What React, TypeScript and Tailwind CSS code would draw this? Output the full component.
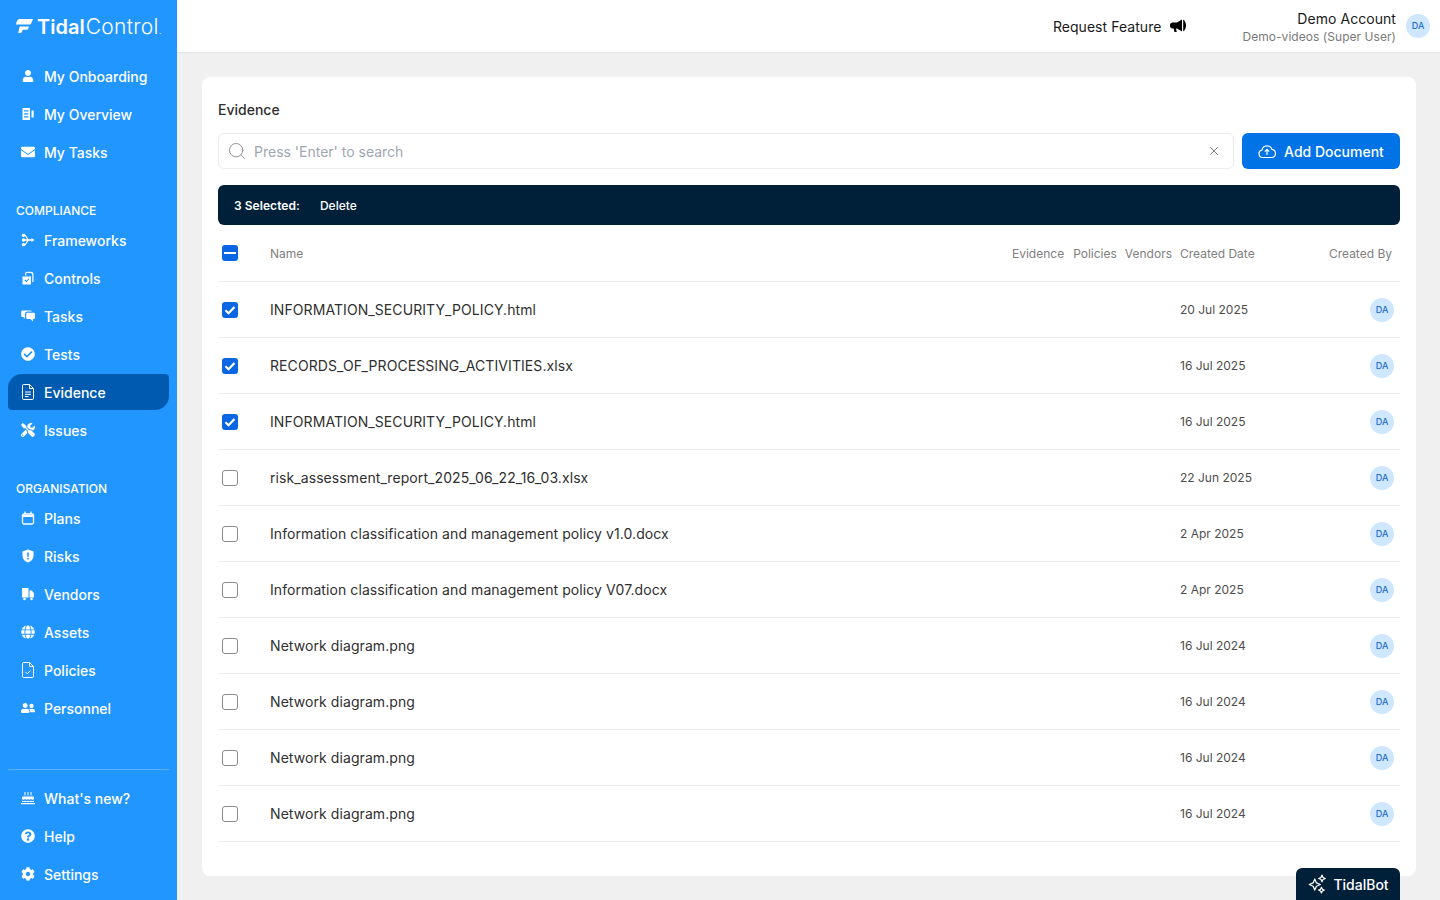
import { useState } from "react";
import type { ReactNode } from "react";

import { Search, X } from "lucide-react";
import {
  FaCheckCircle,
  FaCog,
  FaEnvelope,
  FaGlobe,
  FaQuestionCircle,
  FaTools,
  FaUser,
  FaUserFriends,
} from "react-icons/fa";

const iconClass = "h-[14px] w-[14px] shrink-0";

function OverviewIcon() {
  return (
    <svg viewBox="0 0 14 14" className={iconClass} fill="currentColor">
      <path d="M1.500 1h7.500v12H1.500zM3 3.200v1.300h4.500V3.200zM3 6.200v1.300h4.500V6.200zM3 9.200v1.300h4.500V9.200z" fillRule="evenodd" />
      <path d="M10.500 3.500h2.200v7h-2.200z" />
    </svg>
  );
}

function FrameworksIcon() {
  return (
    <svg viewBox="0 0 14 14" className={iconClass} fill="none" stroke="currentColor" strokeWidth="1.300">
      <path d="M3 2.200C6 2.200 5.500 7 8 7M3 11.800C6 11.800 5.500 7 8 7M3 7h8" />
      <path d="M10.500 5l3 2-3 2z" fill="currentColor" stroke="none" />
      <circle cx="2.500" cy="2.200" r="1.700" fill="currentColor" stroke="none" />
      <circle cx="2.500" cy="7" r="1.700" fill="currentColor" stroke="none" />
      <circle cx="2.500" cy="11.800" r="1.700" fill="currentColor" stroke="none" />
    </svg>
  );
}

function ControlsIcon() {
  return (
    <svg viewBox="0 0 14 14" className={iconClass} fill="currentColor">
      <path d="M1.500 5.500h8.500V13.500H1.500zM3.400 9.300l2 2 3-3.200-.8-.7-2.200 2.400-1.200-1.200z" fillRule="evenodd" />
      <path d="M4 4.500V3a2.200 2.200 0 0 1 2.200-2.200h3.300A2.800 2.800 0 0 1 12.500 3.500V11h-1.200V3.500A1.700 1.700 0 0 0 9.500 2H6.200A1 1 0 0 0 5.200 3v1.500z" />
    </svg>
  );
}

function ChatsIcon() {
  return (
    <svg viewBox="0 0 14 14" className={iconClass} fill="currentColor">
      <path d="M1.500 1.500h8a1.300 1.300 0 0 1 1.300 1.100H6.500A2.500 2.500 0 0 0 4 5.100v3.300l-1.200 2V8H1.500A1.300 1.300 0 0 1 .2 6.700V2.800A1.300 1.300 0 0 1 1.500 1.500z" />
      <path d="M6.500 3.800h6.200A1.300 1.300 0 0 1 14 5.100v3.600A1.300 1.300 0 0 1 12.700 10H12v2.500L9.500 10H6.500a1.300 1.300 0 0 1-1.300-1.300V5.100a1.300 1.300 0 0 1 1.300-1.300z" />
    </svg>
  );
}

function DocIcon({ check }: { check?: boolean }) {
  return (
    <svg viewBox="0 0 12 16" className="h-4 w-3 shrink-0" fill="none" stroke="currentColor" strokeWidth="1">
      <path d="M1.800.5h5.700l4 4v9.700a1.300 1.300 0 0 1-1.300 1.300H1.800A1.300 1.300 0 0 1 .5 14.200V1.800A1.300 1.300 0 0 1 1.800.5z" />
      <path d="M7.500.5v4h4" />
      {check ? <path d="M3.500 10l1.800 1.800 3.200-3.300" /> : <path d="M3 8h6M3 10.300h6M3 12.600h3.500" />}
    </svg>
  );
}

function PlansIcon() {
  return (
    <svg viewBox="0 0 14 14" className={iconClass} fill="none" stroke="currentColor">
      <rect x="1.500" y="3" width="11" height="10" rx="1.500" strokeWidth="1.300" />
      <path d="M1.500 5h11" strokeWidth="2" />
      <path d="M4 .5v2.500M10 .5v2.500" strokeWidth="1.300" />
    </svg>
  );
}

function RisksIcon() {
  return (
    <svg viewBox="0 0 14 14" className={iconClass} fill="currentColor">
      <path
        d="M7 .5l5.500 2v4.200c0 3.300-2.300 5.700-5.500 6.800-3.200-1.100-5.500-3.500-5.500-6.800V2.500zM6.200 3.500v4.200h1.600V3.500zM6.200 9v1.600h1.600V9z"
        fillRule="evenodd"
      />
    </svg>
  );
}

function VendorsIcon() {
  return (
    <svg viewBox="0 0 14 14" className={iconClass} fill="currentColor">
      <path d="M1 1h6.500v9.500H1zM8.500 3.500h2.500l2 3v4H8.500z" />
      <circle cx="3.500" cy="12" r="1.300" />
      <circle cx="10.500" cy="12" r="1.300" />
    </svg>
  );
}

function CakeIcon() {
  return (
    <svg viewBox="0 0 14 14" className={iconClass} fill="currentColor">
      <path d="M3.500 1h1v3.500h-1zM6.500 1h1v3.500h-1zM9.500 1h1v3.500h-1z" />
      <path d="M2 5.500h10a1 1 0 0 1 1 1v1.600c-1 .8-2 .8-3 0-1 .8-2 .8-3 0-1 .8-2 .8-3 0-1 .8-2 .8-3 0V6.500a1 1 0 0 1 1-1z" />
      <path d="M1 9.800c1 .5 2 .5 3 0 1 .5 2 .5 3 0 1 .5 2 .5 3 0 1 .5 2 .5 3 0V11H1zM0 12h14v1.300H0z" />
    </svg>
  );
}

function LogoMark() {
  return (
    <svg viewBox="0 0 17 14" className="h-[14px] w-[17px] shrink-0" fill="white">
      <path d="M3.500 0H17l-1.800 4.500a1.500 1.500 0 0 1-1.400 1H0C.3 2.500 1.500 0 3.500 0z" />
      <path d="M4 7.500h9l-.8 2.200a1.500 1.500 0 0 1-1.400 1H6.800l-1 2.300a1.500 1.500 0 0 1-1.400 1H2.200L3.500 8.300A1 1 0 0 1 4 7.500z" />
    </svg>
  );
}

function NavItem({ icon, label, active }: { icon: ReactNode; label: string; active?: boolean }) {
  return (
    <div
      className={`flex h-9 items-center gap-[9px] pl-[13px] text-[14px] font-medium text-white ${
        active ? "rounded-[4px] rounded-tl-[14px] rounded-br-[14px] bg-[#005bb0]" : ""
      }`}
    >
      <span className="flex w-[14px] justify-center">{icon}</span>
      <span>{label}</span>
    </div>
  );
}

function SectionLabel({ children }: { children: ReactNode }) {
  return <div className="mt-[33px] mb-[3px] pl-2 text-[12px] leading-4 font-medium text-white">{children}</div>;
}

function Sidebar() {
  return (
    <aside className="flex h-[900px] w-[177px] shrink-0 flex-col bg-[#2196ff] px-2 text-white">
      <div className="flex h-[58px] shrink-0 items-start gap-[4px] pt-[19px] pl-2">
        <LogoMark />
        <span className="-mt-[4px] text-[20px] leading-[24px] whitespace-nowrap">
          <span className="font-semibold">Tidal</span>
          <span className="ml-[1px] text-[21px] tracking-[0.3px] font-light">Control</span>
          <span className="text-[10px] font-light">.</span>
        </span>
      </div>

      <div className="flex flex-col gap-[2px]">
        <NavItem icon={<FaUser className="h-3 w-3 shrink-0" />} label="My Onboarding" />
        <NavItem icon={<OverviewIcon />} label="My Overview" />
        <NavItem icon={<FaEnvelope className={iconClass} />} label="My Tasks" />
      </div>

      <SectionLabel>COMPLIANCE</SectionLabel>
      <div className="flex flex-col gap-[2px]">
        <NavItem icon={<FrameworksIcon />} label="Frameworks" />
        <NavItem icon={<ControlsIcon />} label="Controls" />
        <NavItem icon={<ChatsIcon />} label="Tasks" />
        <NavItem icon={<FaCheckCircle className={iconClass} />} label="Tests" />
        <NavItem icon={<DocIcon />} label="Evidence" active />
        <NavItem icon={<FaTools className={iconClass} />} label="Issues" />
      </div>

      <SectionLabel>ORGANISATION</SectionLabel>
      <div className="flex flex-col gap-[2px]">
        <NavItem icon={<PlansIcon />} label="Plans" />
        <NavItem icon={<RisksIcon />} label="Risks" />
        <NavItem icon={<VendorsIcon />} label="Vendors" />
        <NavItem icon={<FaGlobe className={iconClass} />} label="Assets" />
        <NavItem icon={<DocIcon check />} label="Policies" />
        <NavItem icon={<FaUserFriends className={iconClass} />} label="Personnel" />
      </div>

      <div className="mt-auto border-t border-white/25 pt-[10px] pb-[8px]">
        <div className="flex flex-col gap-[2px]">
          <NavItem icon={<CakeIcon />} label="What's new?" />
          <NavItem icon={<FaQuestionCircle className={iconClass} />} label="Help" />
          <NavItem icon={<FaCog className={iconClass} />} label="Settings" />
        </div>
      </div>
    </aside>
  );
}

function Avatar() {
  return (
    <div className="flex h-6 w-6 items-center justify-center rounded-full bg-[#cfe6ff] text-[9px] font-medium text-[#1c6fc9]">
      DA
    </div>
  );
}

function MegaphoneIcon() {
  return (
    <svg viewBox="0 0 16 16" className="h-4 w-4 shrink-0" fill="black">
      <path d="M2.500 4.500H7l5-3v12l-5-3H6l.8 3.500H4.500L3.600 10.500H2.500A2.500 2.500 0 0 1 0 7.500a2.800 2.800 0 0 1 2.500-3z" />
      <path d="M13.200 1.500c1.700 1.200 2.800 3.500 2.800 6s-1.100 4.800-2.800 6z" />
    </svg>
  );
}

function TopBar() {
  return (
    <header className="flex h-[53px] shrink-0 items-center justify-end border-b border-[#e3e3e3] bg-white pr-[10px]">
      <div className="flex items-center gap-[9px] text-[14px] tracking-[0.05px] text-[#1a1a1a]">
        <span>Request Feature</span>
        <MegaphoneIcon />
      </div>
      <div className="ml-[56px] flex flex-col items-end pt-px">
        <span className="text-[14px] leading-[17px] tracking-[0.05px] text-[#1a1a1a]">Demo Account</span>
        <span className="mt-[2px] text-[12px] leading-[15px] tracking-[0.05px] text-[#7a7a7a]">
          Demo-videos (Super User)
        </span>
      </div>
      <div className="ml-[10px]">
        <Avatar />
      </div>
    </header>
  );
}

const rows = [
  { name: "INFORMATION_SECURITY_POLICY.html", date: "20 Jul 2025", checked: true },
  { name: "RECORDS_OF_PROCESSING_ACTIVITIES.xlsx", date: "16 Jul 2025", checked: true },
  { name: "INFORMATION_SECURITY_POLICY.html", date: "16 Jul 2025", checked: true },
  { name: "risk_assessment_report_2025_06_22_16_03.xlsx", date: "22 Jun 2025", checked: false },
  { name: "Information classification and management policy v1.0.docx", date: "2 Apr 2025", checked: false },
  { name: "Information classification and management policy V07.docx", date: "2 Apr 2025", checked: false },
  { name: "Network diagram.png", date: "16 Jul 2024", checked: false },
  { name: "Network diagram.png", date: "16 Jul 2024", checked: false },
  { name: "Network diagram.png", date: "16 Jul 2024", checked: false },
  { name: "Network diagram.png", date: "16 Jul 2024", checked: false },
];

function Checkbox({ state }: { state: "on" | "off" | "mixed" }) {
  if (state === "off") {
    return <div className="h-4 w-4 rounded-[3px] border border-[#8a8a8a] bg-white" />;
  }
  return (
    <div className="flex h-4 w-4 items-center justify-center rounded-[3px] bg-[#0b66e4]">
      {state === "on" ? (
        <svg viewBox="0 0 16 16" className="h-4 w-4" fill="none" stroke="white" strokeWidth="2.200">
          <path d="M3.500 8.300l3 3 6-6.300" />
        </svg>
      ) : (
        <div className="h-[2px] w-3 bg-white" />
      )}
    </div>
  );
}

function EvidenceTable() {
  return (
    <div className="flex flex-col">
      <div className="flex h-[57px] items-center border-b border-[#ececec] text-[12px] text-[#808080]">
        <div className="w-[52px] pl-1">
          <Checkbox state="mixed" />
        </div>
        <div className="flex-1 pt-px">Name</div>
        <div className="flex gap-2 pt-px">
          <span className="mr-px">Evidence</span>
          <span>Policies</span>
          <span>Vendors</span>
        </div>
        <div className="ml-2 w-[100px] pt-px">Created Date</div>
        <div className="max-w-[120px] flex-1 pt-px pr-2 text-right">Created By</div>
      </div>
      {rows.map((row, index) => (
        <div key={index} className="flex h-14 items-center border-b border-[#ececec]">
          <div className="w-[52px] pl-1">
            <Checkbox state={row.checked ? "on" : "off"} />
          </div>
          <div className="flex-1 text-[14px] tracking-[0.08px] text-[#2f2f2f]">{row.name}</div>
          <div className="w-[190px] text-[12px] text-[#4d4d4d]">{row.date}</div>
          <div className="pr-[6px]">
            <Avatar />
          </div>
        </div>
      ))}
    </div>
  );
}

function CloudIcon() {
  return (
    <svg viewBox="0 0 18 16" className="h-4 w-[18px] shrink-0" fill="none" stroke="white" strokeWidth="1.200">
      <path d="M4.500 14.500A3.800 3.800 0 0 1 4 7a5.200 5.200 0 0 1 10-.6 4.100 4.100 0 0 1 0 8.100z" />
      <path d="M9 12V6.500M6.800 8.600L9 6.400l2.200 2.200" />
    </svg>
  );
}

function SparkIcon() {
  return (
    <svg viewBox="0 0 18 18" className="h-5 w-5 shrink-0" fill="none" stroke="white" strokeWidth="1.100" strokeLinejoin="round">
      <path d="M7 4.500l1.500 3.500L12 9.500 8.500 11 7 14.500 5.500 11 2 9.500 5.500 8z" />
      <path d="M13.500 1l.9 2.100 2.100.9-2.100.9-.9 2.100-.9-2.100L10.500 4l2.100-.9z" />
      <path d="M13 12l.8 1.700 1.700.8-1.700.8L13 17l-.8-1.700-1.700-.8 1.700-.8z" />
    </svg>
  );
}

export default function App() {
  const [query] = useState("");

  return (
    <div className="flex h-[900px] overflow-hidden bg-[#f0f0f0] font-['Inter',sans-serif]">
      <Sidebar />
      <div className="relative flex min-w-0 flex-1 flex-col">
        <TopBar />
        <main className="flex-1 pt-6 pr-6 pl-[25px]">
          <div className="h-[799px] rounded-[8px] bg-white px-4">
            <h1 className="pt-[24px] text-[14px] leading-[18px] font-medium text-[#2f2f2f]">Evidence</h1>
            <div className="mt-[14px] flex gap-2">
              <div className="flex h-9 flex-1 items-center rounded-[6px] border border-[#ececec] pr-[12px] pl-[8px]">
                <Search className="h-5 w-5 shrink-0 text-[#8a8a8a]" strokeWidth={1.1} />
                <input
                  readOnly
                  value={query}
                  placeholder="Press 'Enter' to search"
                  className="ml-[7px] flex-1 bg-transparent text-[14px] outline-none placeholder:text-[#a0a6b1]"
                />
                <X className="h-[14px] w-[14px] text-[#4d4d4d]" strokeWidth={1.25} />
              </div>
              <button className="flex h-9 w-[158px] items-center justify-center gap-[8px] rounded-[6px] bg-[#0073e6] text-[14px] font-medium text-white">
                <CloudIcon />
                Add Document
              </button>
            </div>
            <div className="mt-4 flex h-10 items-center gap-5 rounded-[6px] bg-[#001f38] pt-px pl-4 text-[12px] tracking-[0.05px] text-white">
              <span className="font-semibold">3 Selected:</span>
              <span className="font-medium">Delete</span>
            </div>
            <EvidenceTable />
          </div>
        </main>
        <div className="absolute right-10 bottom-0 flex h-8 w-[104px] items-center justify-center gap-[6px] rounded-t-[6px] bg-[#001f38] text-[14px] font-medium text-white">
          <SparkIcon />
          TidalBot
        </div>
      </div>
    </div>
  );
}
